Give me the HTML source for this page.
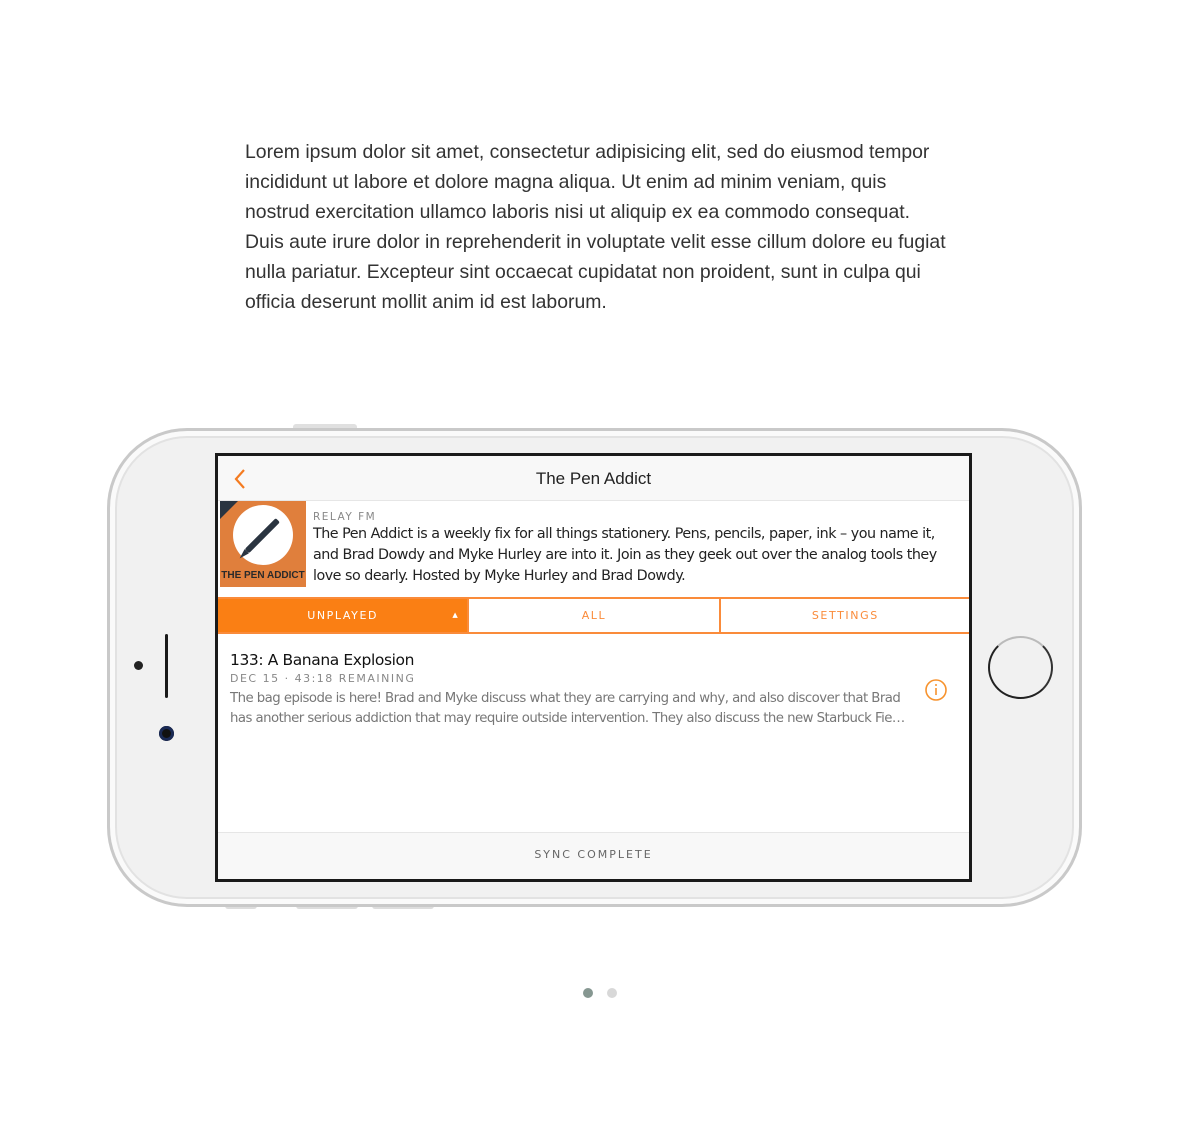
<!DOCTYPE html>
<html><head><meta charset="utf-8"><style>
*{margin:0;padding:0;box-sizing:border-box}
body{width:1200px;height:1129px;background:#fff;position:relative;font-family:"Liberation Sans",sans-serif;overflow:hidden}
.p{position:absolute;left:245px;top:137px;font-size:19.4px;line-height:30px;color:#333;white-space:nowrap}
.phone{position:absolute;left:107px;top:428px;width:975px;height:479px;border-radius:80px;background:#f1f1f1;border:3px solid #c9c9c9;box-shadow:inset 0 0 0 5px #fafafa,inset 0 0 0 7px #e2e2e2}
.screen{position:absolute;left:215px;top:453px;width:757px;height:429px;border:3px solid #1a1a1a;background:#fff;overflow:hidden;font-family:"DejaVu Sans","Liberation Sans",sans-serif}
.hdr{position:absolute;left:0;top:0;width:100%;height:45px;background:#f8f8f8;border-bottom:1px solid #e6e6e6}
.title{position:absolute;left:0;width:100%;top:13px;text-align:center;font-size:17px;color:#222;font-family:"Liberation Sans",sans-serif}
.art{position:absolute;left:2px;top:45px;width:86px;height:86px;background:#e07f3c}
.desc{position:absolute;left:95px;top:54px;width:640px;color:#222;font-size:14.3px;line-height:21px;letter-spacing:-0.5px}
.relay{font-size:10.5px;color:#888;letter-spacing:1.5px;line-height:14px}
.tabs{position:absolute;left:0;top:141px;width:752px;height:37px;border-top:2px solid #fa8b3a;border-bottom:2px solid #fa8b3a;display:flex}
.tab{flex:1;text-align:center;font-size:11px;letter-spacing:1.6px;color:#fa8b3a;line-height:33px}
.tab+.tab{border-left:2px solid #fa8b3a}
.tab.on{background:#fa7f14;color:#fff;position:relative}
.ep{position:absolute;left:12px;top:195px;width:700px}
.ept{font-size:15.5px;color:#111;letter-spacing:-0.4px;font-weight:500}
.epd{font-size:11px;color:#888;letter-spacing:1.5px;margin-top:3px}
.eps{font-size:13.3px;color:#777;line-height:20px;margin-top:4px;letter-spacing:-0.55px;white-space:nowrap}
.foot{position:absolute;left:0;top:376px;width:100%;height:50px;background:#f8f8f8;border-top:1px solid #e6e6e6;text-align:center;font-size:11px;letter-spacing:2px;color:#666;line-height:44px}
.dot{position:absolute;top:988px;width:10px;height:10px;border-radius:50%}
</style></head><body>
<div class="p">Lorem ipsum dolor sit amet, consectetur adipisicing elit, sed do eiusmod tempor<br>incididunt ut labore et dolore magna aliqua. Ut enim ad minim veniam, quis<br>nostrud exercitation ullamco laboris nisi ut aliquip ex ea commodo consequat.<br>Duis aute irure dolor in reprehenderit in voluptate velit esse cillum dolore eu fugiat<br>nulla pariatur. Excepteur sint occaecat cupidatat non proident, sunt in culpa qui<br>officia deserunt mollit anim id est laborum.</div>

<div style="position:absolute;left:293px;top:424px;width:64px;height:6px;border-radius:3px 3px 0 0;background:#e0e0e0"></div>
<div style="position:absolute;left:225px;top:904px;width:32px;height:5px;background:#ddd;border-radius:0 0 3px 3px"></div>
<div style="position:absolute;left:296px;top:904px;width:62px;height:5px;background:#ddd;border-radius:0 0 3px 3px"></div>
<div style="position:absolute;left:372px;top:904px;width:62px;height:5px;background:#ddd;border-radius:0 0 3px 3px"></div>
<div class="phone"></div>
<div style="position:absolute;left:134px;top:661px;width:9px;height:9px;border-radius:50%;background:#222"></div>
<div style="position:absolute;left:165px;top:634px;width:3px;height:64px;background:#1a1a1a;border-radius:2px"></div>
<div style="position:absolute;left:159px;top:726px;width:15px;height:15px;border-radius:50%;background:#111;box-shadow:inset 0 0 0 3px #1a2a55"></div>
<div style="position:absolute;left:988px;top:636px;width:65px;height:63px;border-radius:50%;border:2px solid #222;border-top-color:#bbb;border-right-color:#333"></div>

<div class="screen">
 <div class="hdr"><svg style="position:absolute;left:14px;top:12px" width="16" height="22"><path d="M12 2 L4 11 L12 20" stroke="#f47b20" stroke-width="2.2" fill="none"/></svg><div class="title">The Pen Addict</div></div>
 <div class="art"><svg width="86" height="86"><path d="M0 0 L18 0 L0 18Z" fill="#2a3440"/><circle cx="43" cy="34" r="30" fill="#fff"/><g transform="rotate(-45 43 34)"><rect x="20" y="31" width="44" height="6" rx="2" fill="#2a3440"/><path d="M20 31 L10 34 L20 37Z" fill="#2a3440"/></g><text x="43" y="77" text-anchor="middle" font-size="10" font-weight="bold" fill="#2a2a2a" font-family="Liberation Sans Narrow,Liberation Sans,sans-serif">THE PEN ADDICT</text></svg></div>
 <div class="desc"><div class="relay">RELAY FM</div>The Pen Addict is a weekly fix for all things stationery. Pens, pencils, paper, ink – you name it, and Brad Dowdy and Myke Hurley are into it. Join as they geek out over the analog tools they love so dearly. Hosted by Myke Hurley and Brad Dowdy.</div>
 <div class="tabs"><div class="tab on">UNPLAYED<span style="position:absolute;right:8px;top:0;font-size:7px">▲</span></div><div class="tab">ALL</div><div class="tab">SETTINGS</div></div>
 <div class="ep"><div class="ept">133: A Banana Explosion</div><div class="epd">DEC 15 · 43:18 REMAINING</div><div class="eps">The bag episode is here! Brad and Myke discuss what they are carrying and why, and also discover that Brad<br>has another serious addiction that may require outside intervention. They also discuss the new Starbuck Fie…</div></div>
 <svg style="position:absolute;left:706px;top:222px" width="24" height="24"><circle cx="12" cy="12" r="10" stroke="#f7932e" stroke-width="1.6" fill="none"/><line x1="12" y1="10" x2="12" y2="17" stroke="#f7932e" stroke-width="1.6"/><circle cx="12" cy="7" r="1" fill="#f7932e"/></svg>
 <div class="foot">SYNC COMPLETE</div>
</div>

<div class="dot" style="left:583px;background:#869791"></div>
<div class="dot" style="left:607px;background:#d8d8d8"></div>
</body></html>
